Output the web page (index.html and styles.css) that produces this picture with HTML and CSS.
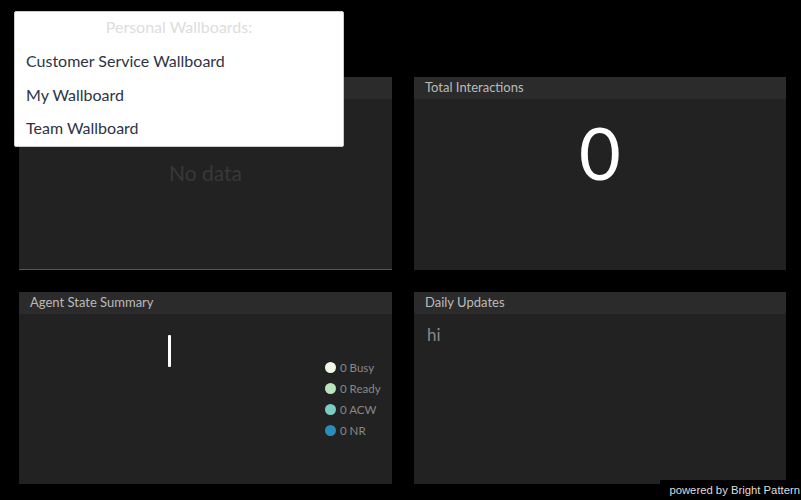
FILE: index.html
```html
<!DOCTYPE html>
<html lang="en">
<head>
    <meta charset="UTF-8">
    <title>Wallboard</title>
    <link rel="stylesheet" href="styles.css">
</head>
<body>
    <!-- Widgets -->
    <div class="board">
        <div class="widget">
            <div class="widget-title"></div>
            <div class="widget-body nodata">No data</div>
        </div>
        <div class="widget">
            <div class="widget-title">Total Interactions</div>
            <div class="widget-body big-number">0</div>
        </div>
        <div class="widget">
            <div class="widget-title">Agent State Summary</div>
            <div class="widget-body summary">
                <div class="bar-area">
                    <div class="bar"></div>
                </div>
                <ul class="legend">
                    <li><span class="dot busy"></span>0 Busy</li>
                    <li><span class="dot ready"></span>0 Ready</li>
                    <li><span class="dot acw"></span>0 ACW</li>
                    <li><span class="dot nr"></span>0 NR</li>
                </ul>
            </div>
        </div>
        <div class="widget">
            <div class="widget-title">Daily Updates</div>
            <div class="widget-body updates">hi</div>
        </div>
    </div>

    <!-- Wallboard menu -->
    <div class="menu">
        <div class="menu-header">Personal Wallboards:</div>
        <div class="menu-item">Customer Service Wallboard</div>
        <div class="menu-item">My Wallboard</div>
        <div class="menu-item">Team Wallboard</div>
    </div>

    <div class="powered">powered by Bright Pattern</div>
</body>
</html>
```

FILE: styles.css
```css
body {
    margin: 0;
    padding: 0;
    background-color: #000;
    font-family: Lato, "Open Sans", sans-serif;
    height: 500px;
    overflow: hidden;
}

.board {
    display: grid;
    grid-template-columns: 373px 372px;
    grid-template-rows: 193px 192px;
    column-gap: 22px;
    row-gap: 22px;
    padding: 77px 0 0 19px;
}

.widget {
    background-color: #222;
    display: flex;
    flex-direction: column;
}

.widget:first-child {
    border-bottom: 1px solid #555;
}

.widget-title {
    height: 22px;
    line-height: 21px;
    background-color: #2b2b2b;
    color: #bbb;
    font-size: 13px;
    padding-left: 11px;
}

.widget-body {
    flex: 1;
    position: relative;
}

.nodata {
    text-align: center;
    color: #383838;
    font-size: 21px;
    padding-top: 61px;
}

.big-number {
    text-align: center;
    color: #fff;
    font-size: 72px;
    line-height: 72px;
    padding-top: 17px;
}

.summary {
    display: flex;
}

.bar-area {
    width: 300px;
    padding-top: 21px;
}

.bar {
    width: 3px;
    height: 32px;
    margin-left: 149px;
    background-color: #fff;
    border-radius: 1px;
}

.legend {
    list-style: none;
    margin: 0;
    padding: 43px 0 0 6px;
}

.legend li {
    display: flex;
    align-items: center;
    height: 21px;
    color: #888;
    font-size: 11.5px;
}

.dot {
    width: 11px;
    height: 11px;
    border-radius: 50%;
    margin-right: 4px;
}

.busy { background-color: #f0f9e8; }
.ready { background-color: #bae4bc; }
.acw { background-color: #7bccc4; }
.nr { background-color: #2b8cbe; }

.updates {
    color: #888;
    font-size: 17px;
    padding: 10px 0 0 13px;
}

.menu {
    position: absolute;
    left: 14px;
    top: 11px;
    width: 328px;
    height: 134px;
    background-color: #fff;
    border: 1px solid #ccc;
    border-radius: 2px;
}

.menu-header {
    text-align: center;
    color: #ddd;
    font-size: 16px;
    line-height: 30px;
    margin-bottom: 2px;
}

.menu-item {
    color: #2d3445;
    font-size: 16px;
    line-height: 33.5px;
    padding-left: 11px;
}

.powered {
    position: absolute;
    right: 0;
    bottom: 0;
    padding: 2px 1px 2px 9px;
    background-color: #000;
    color: #ddd;
    font-family: "Liberation Sans", Arial, sans-serif;
    font-size: 11.3px;
    line-height: 16px;
}
```
